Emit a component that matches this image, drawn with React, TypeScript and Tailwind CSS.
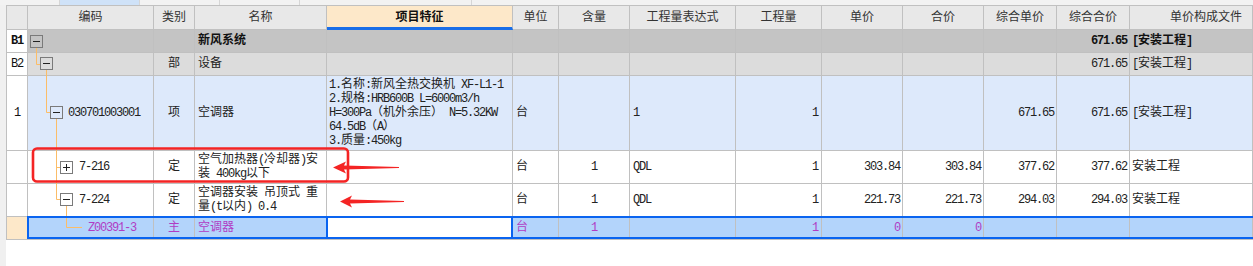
import type { ReactNode } from "react";

const GRID =
  "grid grid-cols-[21px_126px_41px_132px_186px_46px_71px_106px_86px_81px_81px_73px_73px_1fr]";

// alignment per column
const ALIGN = [
  "justify-center",
  "",
  "justify-center",
  "pl-[3px]",
  "pl-[2px]",
  "pl-[3px]",
  "justify-center",
  "pl-[3px]",
  "justify-end pr-[3px]",
  "justify-end pr-[2px]",
  "justify-end pr-[2px]",
  "justify-end pr-[2px]",
  "justify-end pr-[2px]",
  "pl-[2px]",
];

const HEADERS = ["", "编码", "类别", "名称", "项目特征", "单位", "含量", "工程量表达式", "工程量", "单价", "合价", "综合单价", "综合合价", "单价构成文件"];

function Mix({ text }: { text: string }) {
  const parts = text.match(/[\x20-\x7e]+|[^\x20-\x7e]+/g) ?? [];
  return (
    <>
      {parts.map((p, i) =>
        /^[\x20-\x7e]/.test(p) ? (
          <span key={i} className="tracking-[-1.2px]">
            {p}
          </span>
        ) : (
          <span key={i}>{p}</span>
        )
      )}
    </>
  );
}

type Row = {
  h: string;
  bg: string;
  headBg: string;
  text: string;
  bold?: boolean;
  codePad: string;
  cells: (string | string[])[];
  featureBg?: string;
};

const ROWS: Row[] = [
  {
    h: "h-[23px]",
    bg: "bg-[#c4c4c4]",
    headBg: "bg-white",
    text: "text-[#111]",
    bold: true,
    codePad: "",
    cells: ["B1", "", "", "新风系统", "", "", "", "", "", "", "", "", "671.65", "[安装工程]"],
  },
  {
    h: "h-[23px]",
    bg: "bg-[#dcdcdc]",
    headBg: "bg-white",
    text: "text-[#222]",
    codePad: "",
    cells: ["B2", "", "部", "设备", "", "", "", "", "", "", "", "", "671.65", "[安装工程]"],
  },
  {
    h: "h-[75px]",
    bg: "bg-[#dde9fb]",
    headBg: "bg-white",
    text: "text-[#222]",
    codePad: "pl-[40px]",
    cells: [
      "1",
      "030701003001",
      "项",
      "空调器",
      ["1.名称:新风全热交换机 XF-L1-1", "2.规格:HRB600B L=6000m3/h", "H=300Pa（机外余压） N=5.32KW", "64.5dB（A）", "3.质量:450kg"],
      "台",
      "",
      "1",
      "1",
      "",
      "",
      "671.65",
      "671.65",
      "[安装工程]",
    ],
  },
  {
    h: "h-[33px]",
    bg: "bg-white",
    headBg: "bg-white",
    text: "text-[#222]",
    codePad: "pl-[51px]",
    cells: ["", "7-216", "定", ["空气加热器(冷却器)安", "装 400kg以下"], "", "台", "1", "QDL", "1", "303.84", "303.84", "377.62", "377.62", "安装工程"],
  },
  {
    h: "h-[33px]",
    bg: "bg-white",
    headBg: "bg-white",
    text: "text-[#222]",
    codePad: "pl-[51px]",
    cells: ["", "7-224", "定", ["空调器安装 吊顶式 重", "量(t以内) 0.4"], "", "台", "1", "QDL", "1", "221.73", "221.73", "294.03", "294.03", "安装工程"],
  },
  {
    h: "h-[23px]",
    bg: "bg-[#b3d4fb]",
    headBg: "bg-[#fde8c9]",
    text: "text-[#b03cc4]",
    codePad: "pl-[60px]",
    featureBg: "bg-white",
    cells: ["", "Z00391-3", "主", "空调器", "", "台", "1", "", "1", "0", "0", "", "", ""],
  },
];

function Cell({ className, children }: { className: string; children?: ReactNode }) {
  return (
    <div className={`flex items-center overflow-hidden whitespace-pre border-r border-b border-[#c0c0c0] ${className}`}>
      {children}
    </div>
  );
}

function Overlay() {
  const orange = "#fbbd68";
  const box = (x: number, y: number, plus = false) => (
    <g>
      <rect x={x + 0.5} y={y + 0.5} width={12} height={12} fill="none" stroke="#7a7a7a" />
      <line x1={x + 3} y1={y + 6.5} x2={x + 10} y2={y + 6.5} stroke="#222" />
      {plus && <line x1={x + 6.5} y1={y + 3} x2={x + 6.5} y2={y + 10} stroke="#222" />}
    </g>
  );
  return (
    <svg className="pointer-events-none absolute left-0 top-0" width={1253} height={266}>
      {/* tree lines */}
      <path d="M36.5 48 V64.5 H40" stroke={orange} fill="none" />
      <path d="M46.5 70 V112.5 H50" stroke={orange} fill="none" />
      <path d="M56.5 119 V199.5 H60 M56.5 167.5 H60" stroke={orange} fill="none" />
      <path d="M66.5 206 V227.5 H82" stroke={orange} fill="none" />
      {box(30, 35)}
      {box(40, 57)}
      {box(50, 106)}
      {box(60, 161, true)}
      {box(60, 193)}
      {/* selection */}
      <rect x={28} y={217} width={1226} height={21} fill="none" stroke="#0a64f0" strokeWidth={2} />
      <rect x={327} y={217} width={185} height={21} fill="none" stroke="#0a64f0" strokeWidth={2} />
      {/* annotations */}
      <rect x={33} y={148.5} width={315} height={33} rx={4} fill="none" stroke="#f42424" strokeWidth={2.6} />
      <path d="M333 167.5 L346 161.5 L344 165.6 L399 167 L399 168 L344 169.4 L346 173.5 Z" fill="#f42424" />
      <path d="M340 201.5 L352 195.5 L350 199.6 L404 201 L404 202 L350 203.4 L352 207.5 Z" fill="#f42424" />
    </svg>
  );
}

export default function App() {
  return (
    <div className="relative flex h-[266px] w-[1253px] flex-col overflow-hidden bg-white font-['Liberation_Mono','Noto_Sans_CJK_SC',monospace] text-[12px]">
      {/* top tab strip */}
      <div className="flex h-[5px] bg-[#f2f2f2]">
        <div className="w-[60px] border-r border-[#d6d6d6]" />
        <div className="w-[80px] border-r border-[#d6d6d6] bg-[#cfe2f8]" />
        <div className="w-[80px] border-r border-[#d6d6d6]" />
        <div className="w-[80px] border-r border-[#d6d6d6]" />
        <div className="w-[172px] border-r border-[#d6d6d6]" />
      </div>

      <div className="flex flex-1">
        <div className="w-[6px] bg-[#f0f0f0]" />
        <div className="flex-1 self-start border-l border-t border-[#c0c0c0]">
          {/* header */}
          <div className={`${GRID} h-[24px] bg-[#e8e8e8] text-[#333]`}>
            {HEADERS.map((h, i) =>
              i === 4 ? (
                <Cell key={i} className="justify-center border-b-[3px] border-b-[#1a6ee8] bg-[#fde8c9] pt-[2px] font-bold text-[#111]">
                  {h}
                </Cell>
              ) : (
                <Cell key={i} className={i === 13 ? "justify-end pr-[10px]" : "justify-center"}>
                  {h}
                </Cell>
              )
            )}
          </div>

          {ROWS.map((r, ri) => (
            <div key={ri} className={`${GRID} ${r.h} ${r.text} ${r.bold ? "font-bold" : ""}`}>
              {r.cells.map((c, ci) => {
                const bg = ci === 0 ? r.headBg : ci === 4 && r.featureBg ? r.featureBg : r.bg;
                const align = ci === 1 ? r.codePad : ALIGN[ci];
                const headColor = ci === 0 ? "text-[#111]" : "";
                return (
                  <Cell key={ci} className={`${bg} ${align} ${headColor}`}>
                    {Array.isArray(c) ? (
                      <div className="flex flex-col leading-[14px]">
                        {c.map((line, li) => (
                          <div key={li}>
                            <Mix text={line} />
                          </div>
                        ))}
                      </div>
                    ) : (
                      <Mix text={c} />
                    )}
                  </Cell>
                );
              })}
            </div>
          ))}
        </div>
      </div>

      <Overlay />
    </div>
  );
}
